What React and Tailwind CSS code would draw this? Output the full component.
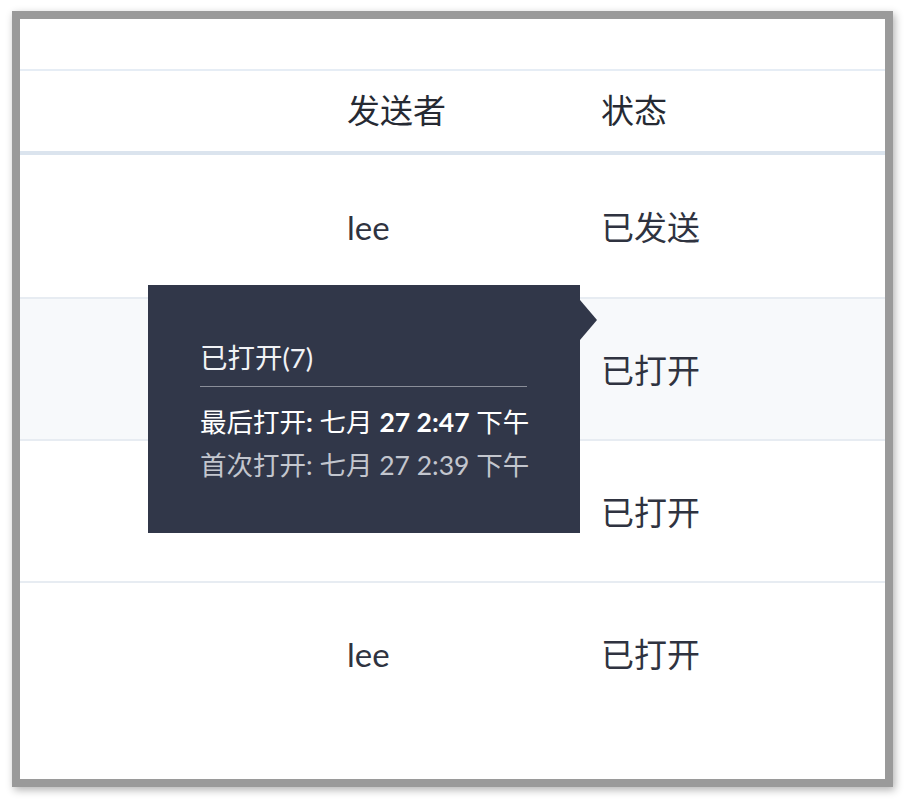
// Email send-status table with a hover tooltip on the "已打开" cell.

const font = { fontFamily: '"Lato", "Noto Sans CJK SC", sans-serif' };

const rows = [
  { sender: 'lee', status: '已发送' },
  { sender: '', status: '已打开', hover: true },
  { sender: '', status: '已打开' },
  { sender: 'lee', status: '已打开' },
];

function Tooltip() {
  return (
    <div className="absolute left-[128px] top-[266px] w-[432px] h-[248px] bg-[#313749] pl-[52px] pt-[55px] text-[26.5px]">
      <div className="absolute right-[-17px] top-[15px] w-0 h-0 border-y-[20px] border-y-transparent border-l-[17px] border-l-[#313749]" />
      <div className="leading-[36px] text-[27.5px] text-[#f1f2f5]">已打开(7)</div>
      <div className="mt-[10px] w-[327px] h-px bg-[#8a8e99]" />
      <div className="mt-[14px] leading-[43px] text-white whitespace-nowrap">
        最后打开<span className="font-bold">:</span> 七月 <span className="font-bold">27 2:47</span> 下午
      </div>
      <div className="leading-[43px] text-[#c3c6ce] whitespace-nowrap">首次打开: 七月 27 2:39 下午</div>
    </div>
  );
}

export default function App() {
  return (
    <div className="w-[905px] h-[799px] bg-white pt-[11px] pl-[12px]" style={font}>
      <div className="w-[881px] h-[776px] border-[8px] border-[#9a9a9a] shadow-[2px_3px_8px_rgba(0,0,0,0.3)] bg-white">
        <div className="relative h-full overflow-hidden">
          <div className="h-[50px]" />
          <div className="border-t-2 border-[#e6edf5] border-b-4 border-b-[#dbe4ee] h-[86px] flex items-center text-[33px] text-[#262a33]">
            <div className="w-[327px]" />
            <div className="w-[254px]">发送者</div>
            <div>状态</div>
          </div>
          {rows.map((r, i) => (
            <div
              key={i}
              className={`h-[142px] flex items-center text-[33px] text-[#2f3340] ${i > 0 ? 'border-t-2 border-[#e7ecf2]' : ''} ${r.hover ? 'bg-[#f7f9fb]' : ''}`}
            >
              <div className="w-[327px]" />
              <div className="w-[254px] pt-[4px]">{r.sender}</div>
              <div className="pt-[4px]">{r.status}</div>
            </div>
          ))}
          <Tooltip />
        </div>
      </div>
    </div>
  );
}
